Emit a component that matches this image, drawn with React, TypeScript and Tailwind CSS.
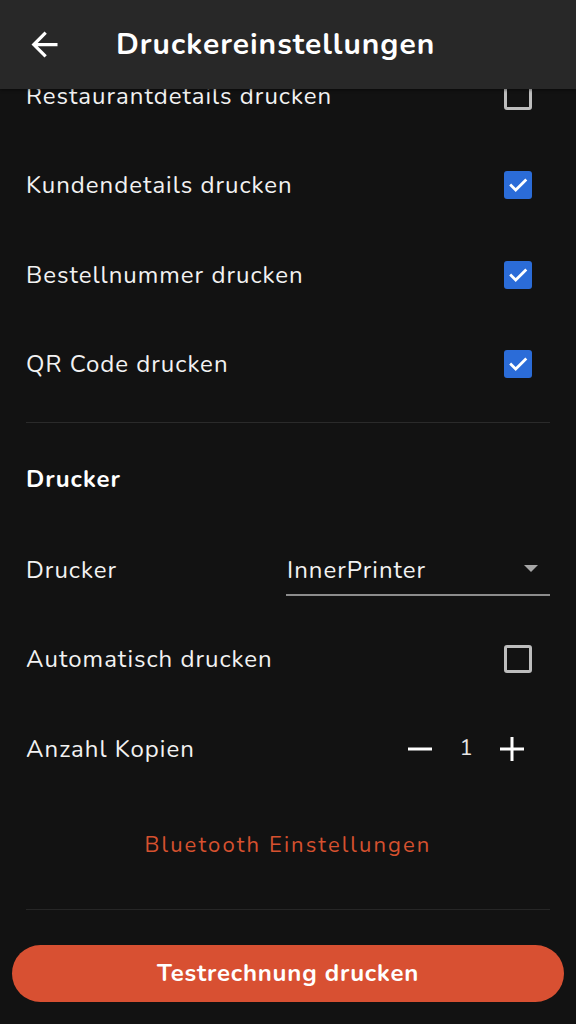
import { useState } from 'react';

type CheckRowProps = {
  label: string;
  checked: boolean;
  onToggle: () => void;
};

function Checkbox({ checked, onToggle }: { checked: boolean; onToggle: () => void }) {
  return (
    <button
      type="button"
      onClick={onToggle}
      className={`mr-[18px] flex h-[28px] w-[28px] items-center justify-center rounded-[3px] ${
        checked ? 'bg-[#2b6cd8]' : 'border-[3px] border-[#bdbdbd]'
      }`}
    >
      {checked ? (
        <svg width="22" height="22" viewBox="0 0 24 24" fill="none">
          <path d="M4.5 12.5l5 5L20 7" stroke="white" strokeWidth="3" strokeLinecap="square" />
        </svg>
      ) : null}
    </button>
  );
}

function CheckRow({ label, checked, onToggle }: CheckRowProps) {
  return (
    <div className="flex h-[89.5px] items-center justify-between px-[26px]">
      <span className="text-[24px] tracking-[1px] text-[#f2f2f2]">{label}</span>
      <Checkbox checked={checked} onToggle={onToggle} />
    </div>
  );
}

export default function App() {
  const [flags, setFlags] = useState({
    restaurant: false,
    kunde: true,
    bestellnummer: true,
    qr: true,
    auto: false,
  });
  const [copies, setCopies] = useState(1);

  const toggle = (key: keyof typeof flags) => setFlags((f) => ({ ...f, [key]: !f[key] }));

  return (
    <div
      className="flex h-[1024px] w-full flex-col overflow-hidden bg-[#121212] text-white"
      style={{ fontFamily: 'Nunito, Lato, "Noto Sans", sans-serif' }}
    >
      <header className="z-10 flex h-[89px] shrink-0 items-center bg-[#282828] shadow-[0_1px_3px_rgba(0,0,0,0.5)]">
        <button type="button" className="ml-[25px] flex h-[39px] w-[39px] items-center justify-center">
          <svg width="39" height="39" viewBox="0 0 24 24">
            <path
              d="M20 11H7.83l5.59-5.59L12 4l-8 8 8 8 1.41-1.41L7.83 13H20v-2z"
              fill="white"
            />
          </svg>
        </button>
        <h1 className="ml-[52px] text-[30px] font-bold tracking-[1px] text-white">Druckereinstellungen</h1>
      </header>

      <div className="flex-1 overflow-hidden">
        <div className="-mt-[38px]">
          <CheckRow label="Restaurantdetails drucken" checked={flags.restaurant} onToggle={() => toggle('restaurant')} />
          <CheckRow label="Kundendetails drucken" checked={flags.kunde} onToggle={() => toggle('kunde')} />
          <CheckRow label="Bestellnummer drucken" checked={flags.bestellnummer} onToggle={() => toggle('bestellnummer')} />
          <CheckRow label="QR Code drucken" checked={flags.qr} onToggle={() => toggle('qr')} />

          <div className="mx-[26px] mt-[13px] h-px bg-[#2a2a2a]" />

          <div className="flex h-[102px] items-center px-[26px] pt-[10px]">
            <span className="text-[24px] font-bold tracking-[1px] text-white">Drucker</span>
          </div>

          <div className="flex h-[89.5px] items-center justify-between px-[26px]">
            <span className="text-[24px] tracking-[1px] text-[#f2f2f2]">Drucker</span>
            <div className="relative flex h-[52px] w-[264px] items-center border-b-2 border-[#8c8c8c] pt-[2px]">
              <span className="pl-[1px] text-[24px] tracking-[1px] text-[#f2f2f2]">InnerPrinter</span>
              <svg className="absolute right-[11px] top-[20px]" width="16" height="10" viewBox="0 0 16 10">
                <path d="M1 1h14L8 8z" fill="#a6a6a6" />
              </svg>
            </div>
          </div>

          <CheckRow label="Automatisch drucken" checked={flags.auto} onToggle={() => toggle('auto')} />

          <div className="flex h-[89.5px] items-center justify-between px-[26px]">
            <span className="text-[24px] tracking-[1px] text-[#f2f2f2]">Anzahl Kopien</span>
            <div className="mr-[15px] flex items-center gap-[12px]">
              <button
                type="button"
                onClick={() => setCopies((c) => Math.max(1, c - 1))}
                className="flex h-[46px] w-[46px] items-center justify-center"
              >
                <svg width="24" height="24" viewBox="0 0 24 24">
                  <path d="M0 12h24" stroke="white" strokeWidth="3" />
                </svg>
              </button>
              <span className="w-[22px] text-center text-[22px] text-[#e6e6e6]">{copies}</span>
              <button
                type="button"
                onClick={() => setCopies((c) => c + 1)}
                className="flex h-[46px] w-[46px] items-center justify-center"
              >
                <svg width="24" height="24" viewBox="0 0 24 24">
                  <path d="M0 12h24M12 0v24" stroke="white" strokeWidth="3" />
                </svg>
              </button>
            </div>
          </div>

          <div className="flex justify-center pb-[50px] pt-[37px]">
            <span className="text-[22px] leading-[28px] tracking-[2.1px] text-[#d6512f]">Bluetooth Einstellungen</span>
          </div>

          <div className="mx-[26px] h-px bg-[#262626]" />

          <div className="px-[12px] pt-[35px]">
            <button
              type="button"
              className="flex h-[57px] w-full items-center justify-center rounded-full bg-[#d85032] text-[24px] font-bold tracking-[0.8px] text-white"
            >
              Testrechnung drucken
            </button>
          </div>
        </div>
      </div>
    </div>
  );
}
